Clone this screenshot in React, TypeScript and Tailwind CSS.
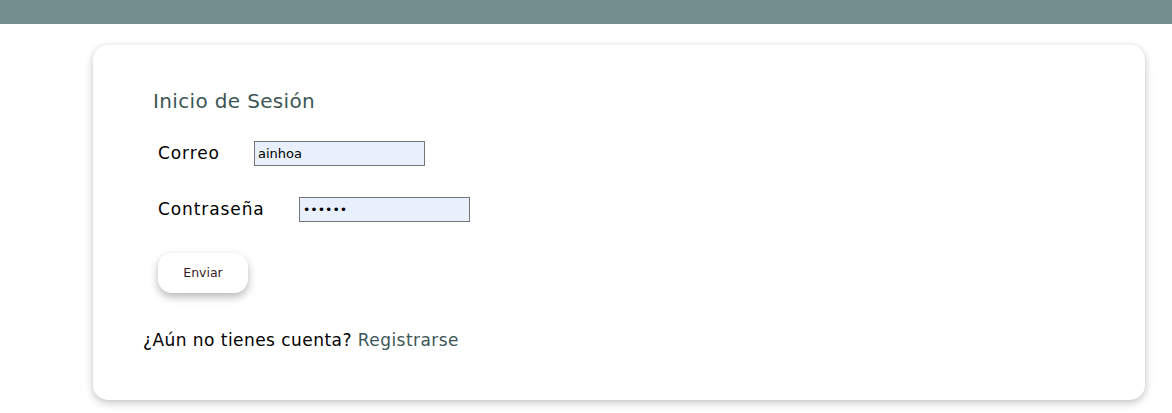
export default function App() {
  return (
    <div className="min-h-[413px] bg-white font-['DejaVu_Sans',sans-serif]">
      <header className="h-6 bg-[#738e8d]" />
      <main className="pt-[21px] pl-[93px] pr-[27px]">
        <div className="h-[355px] rounded-[15px] bg-white pl-[50px] pt-[41px] shadow-[0_3px_8px_rgba(0,0,0,0.22),0_0_6px_rgba(0,0,0,0.04)]">
          <h2 className="ml-[10px] h-[30px] text-[20px] leading-[30px] tracking-[0.35px] text-[#3d5656]">Inicio de Sesión</h2>

          <form className="ml-[15px]">
            <div className="mt-[25px] flex h-[25px] items-center">
              <label className="w-[96px] text-[17px] tracking-[0.9px] text-black">Correo</label>
              <input
                defaultValue="ainhoa"
                className="h-[25px] w-[171px] border border-[#767676] bg-[#e8f0fe] px-[3px] text-[13px] text-black outline-none"
              />
            </div>
            <div className="mt-[31px] flex h-[25px] items-center">
              <label className="w-[141px] text-[17px] tracking-[0.9px] text-black">Contraseña</label>
              <input
                type="password"
                defaultValue="123456"
                className="h-[25px] w-[171px] border border-[#767676] bg-[#e8f0fe] px-[3px] text-[12.5px] text-black outline-none"
              />
            </div>
            <button
              type="button"
              className="mt-[31px] h-[40px] w-[90px] rounded-[14px] bg-white text-[12.5px] text-[#3a1a2e] shadow-[0_4px_9px_rgba(0,0,0,0.28)]"
            >
              Enviar
            </button>
          </form>

          <p className="mt-[35px] text-[17px] leading-6 tracking-[0.45px] text-black">
            ¿Aún no tienes cuenta? <a href="#" className="text-[#3d5656]">Registrarse</a>
          </p>
        </div>
      </main>
    </div>
  );
}
